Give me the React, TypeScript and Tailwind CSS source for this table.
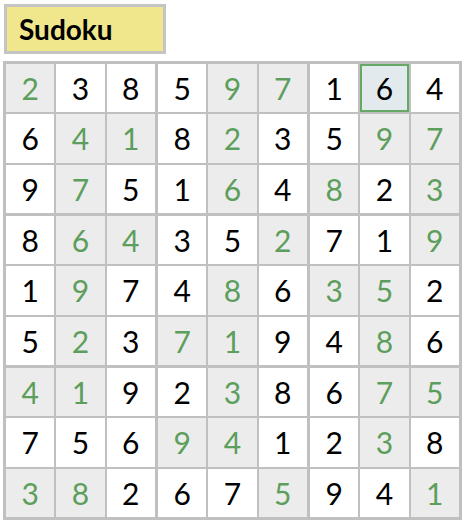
const puzzle = [
  "2g 3 8 5 9g 7g 1 6 4",
  "6 4g 1g 8 2g 3 5 9g 7g",
  "9 7g 5 1 6g 4 8g 2 3g",
  "8 6g 4g 3 5 2g 7 1 9g",
  "1 9g 7 4 8g 6 3g 5g 2",
  "5 2g 3 7g 1g 9 4 8g 6",
  "4g 1g 9 2 3g 8 6 7g 5g",
  "7 5 6 9g 4g 1 2 3g 8",
  "3g 8g 2 6 7 5g 9 4 1g",
].map((row) =>
  row.split(" ").map((c) => ({ value: c[0], given: c.endsWith("g") })),
);

const selected = { row: 0, col: 7 };

function Cell({ row, col }: { row: number; col: number }) {
  const cell = puzzle[row][col];
  const isSelected = row === selected.row && col === selected.col;

  let cls = "bg-white text-black";
  if (cell.given) cls = "bg-[#ececec] text-[#5c9e5c]";
  if (isSelected) cls = "bg-[#e2eaee] text-black shadow-[inset_0_0_0_2px_#66a866]";

  return (
    <div className={`flex aspect-square items-center justify-center text-[30px] leading-none ${cls}`}>
      {cell.value}
    </div>
  );
}

function Box({ index }: { index: number }) {
  const startRow = Math.floor(index / 3) * 3;
  const startCol = (index % 3) * 3;
  const cells = [];
  for (let r = 0; r < 3; r++) {
    for (let c = 0; c < 3; c++) {
      cells.push(<Cell key={`${r}-${c}`} row={startRow + r} col={startCol + c} />);
    }
  }
  return <div className="grid grid-cols-3 gap-[2px]">{cells}</div>;
}

export default function App() {
  return (
    <div
      className="min-h-screen bg-white pl-[3px] pt-[4px]"
      style={{ fontFamily: "Lato, 'Open Sans', sans-serif" }}
    >
      <div className="ml-[1px] flex h-[50px] w-[162px] items-center border-[3px] border-[#c4c4c4] bg-[#f0e68c] pl-[12px]">
        <span className="text-[28px] font-bold leading-none text-black">Sudoku</span>
      </div>

      <div className="mt-[7px] grid w-[459px] grid-cols-3 gap-[3px] border-[3px] border-[#c0c0c0] bg-[#c0c0c0]">
        {Array.from({ length: 9 }, (_, i) => (
          <Box key={i} index={i} />
        ))}
      </div>
    </div>
  );
}
